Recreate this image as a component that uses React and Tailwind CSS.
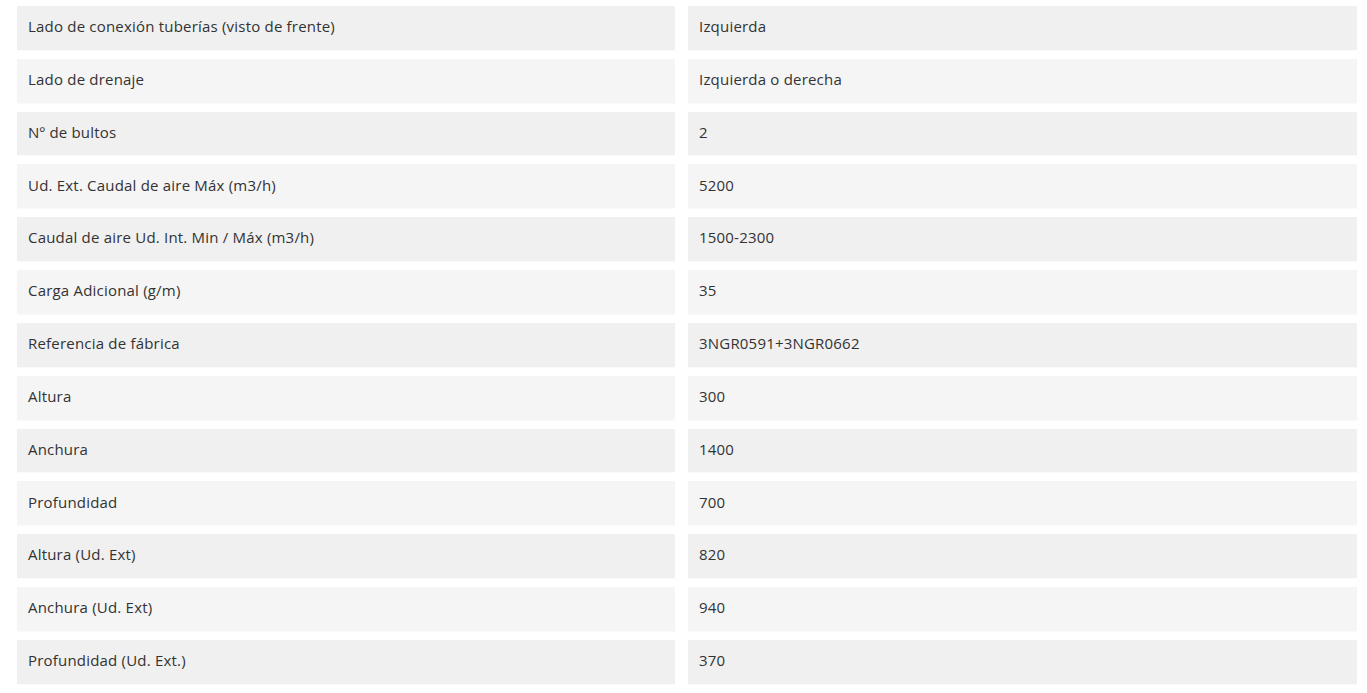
const specs = [
  ['Lado de conexión tuberías (visto de frente)', 'Izquierda'],
  ['Lado de drenaje', 'Izquierda o derecha'],
  ['Nº de bultos', '2'],
  ['Ud. Ext. Caudal de aire Máx (m3/h)', '5200'],
  ['Caudal de aire Ud. Int. Min / Máx (m3/h)', '1500-2300'],
  ['Carga Adicional (g/m)', '35'],
  ['Referencia de fábrica', '3NGR0591+3NGR0662'],
  ['Altura', '300'],
  ['Anchura', '1400'],
  ['Profundidad', '700'],
  ['Altura (Ud. Ext)', '820'],
  ['Anchura (Ud. Ext)', '940'],
  ['Profundidad (Ud. Ext.)', '370'],
];

export default function App() {
  return (
    <div className="bg-white min-h-screen pt-[6px] pl-[17px] pr-[10px] font-['Open_Sans',sans-serif] text-[15px] tracking-[0.2px] text-[#333333]">
      <div className="grid grid-cols-[658px_1fr] gap-x-[13px] gap-y-[9px]">
        {specs.map(([label, value], i) => {
          const bg = i % 2 === 0 ? 'bg-[#f0f0f0]' : 'bg-[#f5f5f5]';
          return [
            <div key={`l${i}`} className={`${bg} h-[43.83px] flex items-center px-[11px] pb-[3px] shadow-[0_1px_0_rgba(0,0,0,0.02)]`}>
              {label}
            </div>,
            <div key={`v${i}`} className={`${bg} h-[43.83px] flex items-center px-[11px] pb-[3px] shadow-[0_1px_0_rgba(0,0,0,0.02)]`}>
              {value}
            </div>,
          ];
        })}
      </div>
    </div>
  );
}
